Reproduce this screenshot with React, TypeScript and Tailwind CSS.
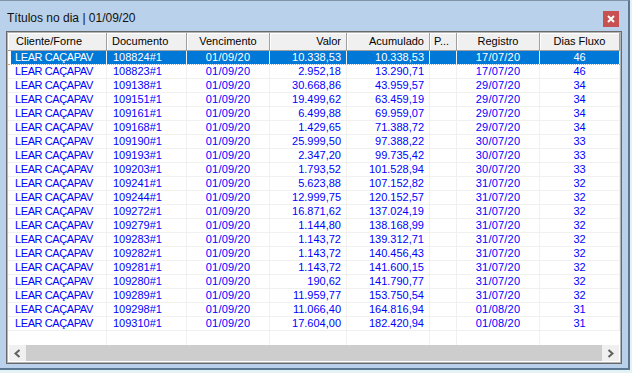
import React from "react";

type Row = {
  doc: string;
  valor: string;
  acum: string;
  reg: string;
  dias: string;
};

const rows: Row[] = [
  { doc: "108824#1", valor: "10.338,53", acum: "10.338,53", reg: "17/07/20", dias: "46" },
  { doc: "108823#1", valor: "2.952,18", acum: "13.290,71", reg: "17/07/20", dias: "46" },
  { doc: "109138#1", valor: "30.668,86", acum: "43.959,57", reg: "29/07/20", dias: "34" },
  { doc: "109151#1", valor: "19.499,62", acum: "63.459,19", reg: "29/07/20", dias: "34" },
  { doc: "109161#1", valor: "6.499,88", acum: "69.959,07", reg: "29/07/20", dias: "34" },
  { doc: "109168#1", valor: "1.429,65", acum: "71.388,72", reg: "29/07/20", dias: "34" },
  { doc: "109190#1", valor: "25.999,50", acum: "97.388,22", reg: "30/07/20", dias: "33" },
  { doc: "109193#1", valor: "2.347,20", acum: "99.735,42", reg: "30/07/20", dias: "33" },
  { doc: "109203#1", valor: "1.793,52", acum: "101.528,94", reg: "30/07/20", dias: "33" },
  { doc: "109241#1", valor: "5.623,88", acum: "107.152,82", reg: "31/07/20", dias: "32" },
  { doc: "109244#1", valor: "12.999,75", acum: "120.152,57", reg: "31/07/20", dias: "32" },
  { doc: "109272#1", valor: "16.871,62", acum: "137.024,19", reg: "31/07/20", dias: "32" },
  { doc: "109279#1", valor: "1.144,80", acum: "138.168,99", reg: "31/07/20", dias: "32" },
  { doc: "109283#1", valor: "1.143,72", acum: "139.312,71", reg: "31/07/20", dias: "32" },
  { doc: "109282#1", valor: "1.143,72", acum: "140.456,43", reg: "31/07/20", dias: "32" },
  { doc: "109281#1", valor: "1.143,72", acum: "141.600,15", reg: "31/07/20", dias: "32" },
  { doc: "109280#1", valor: "190,62", acum: "141.790,77", reg: "31/07/20", dias: "32" },
  { doc: "109289#1", valor: "11.959,77", acum: "153.750,54", reg: "31/07/20", dias: "32" },
  { doc: "109298#1", valor: "11.066,40", acum: "164.816,94", reg: "01/08/20", dias: "31" },
  { doc: "109310#1", valor: "17.604,00", acum: "182.420,94", reg: "01/08/20", dias: "31" },
];

const headCell =
  "h-full flex items-center shrink-0 bg-[#f0f0f0] border-r border-b border-[#a0a0a0] shadow-[inset_1px_1px_0_#ffffff] whitespace-nowrap overflow-hidden";

function Chevron({ dir }: { dir: "left" | "right" }) {
  return (
    <svg width="7" height="9" viewBox="0 0 7 9">
      <polyline
        points={dir === "left" ? "5.5,1 1.5,4.5 5.5,8" : "1.5,1 5.5,4.5 1.5,8"}
        fill="none"
        stroke="#606060"
        strokeWidth="2"
      />
    </svg>
  );
}

export default function App() {
  return (
    <div
      className="w-[632px] h-[373px] bg-[#e4f1f5] overflow-hidden flex"
      style={{ fontFamily: '"Liberation Sans", Arial, sans-serif' }}
    >
      <div className="w-[630px] h-[370px] shrink-0 bg-[#b9d1ea] border-t border-t-[#8193a6] border-r-2 border-b-2 border-[#5b7892] flex flex-col">
        {/* Title bar */}
        <div className="h-[30px] flex items-start justify-between pl-[7px] pr-[9px] shrink-0">
          <div className="mt-[11px] text-[12px] leading-none text-[#111]">
            Títulos no dia | 01/09/20
          </div>
          <div className="mt-[10px] w-[16px] h-[16px] bg-[#c75050] flex items-center justify-center">
            <svg width="8" height="8" viewBox="0 0 8 8">
              <path d="M1 1 L7 7 M7 1 L1 7" stroke="#ffffff" strokeWidth="2" />
            </svg>
          </div>
        </div>

        {/* List view */}
        <div className="ml-[6px] w-[616px] h-[333px] border border-[#696969] shrink-0">
          <div className="w-full h-full border border-[#b4b4b4] bg-white flex flex-col text-[11px] leading-none">
            {/* Header */}
            <div className="h-[18px] flex shrink-0 text-black">
              <div className={`${headCell} w-[99px] pl-[8px]`}>Cliente/Forne</div>
              <div className={`${headCell} w-[80px] pl-[5px]`}>Documento</div>
              <div className={`${headCell} w-[83px] justify-center`}>Vencimento</div>
              <div className={`${headCell} w-[77px] justify-end pr-[5px]`}>Valor</div>
              <div className={`${headCell} w-[83px] justify-end pr-[5px]`}>Acumulado</div>
              <div className={`${headCell} w-[27px] pl-[4px]`}>P...</div>
              <div className={`${headCell} w-[83px] justify-center`}>Registro</div>
              <div className={`${headCell} w-[80px] justify-center`}>Dias Fluxo</div>
            </div>

            {/* Rows */}
            {rows.map((r, i) => {
              const sel = i === 0;
              const cell = `h-full flex items-center shrink-0 border-r border-[#f0f0f0] whitespace-nowrap ${
                sel ? "bg-[#0078d7]" : ""
              }`;
              return (
                <div
                  key={r.doc}
                  className={`h-[14px] flex shrink-0 border-b ${
                    sel ? "border-dotted border-[#e9a25a] text-white" : "border-[#f0f0f0] text-[#0000ff]"
                  }`}
                >
                  <div className="w-[3px] shrink-0" />
                  <div className={`${cell} w-[96px] pl-[4px] tracking-[-0.4px]`}>LEAR CAÇAPAV</div>
                  <div className={`${cell} w-[80px] pl-[6px]`}>{r.doc}</div>
                  <div className={`${cell} w-[83px] justify-center tracking-[0.2px]`}>01/09/20</div>
                  <div className={`${cell} w-[77px] justify-end pr-[5px]`}>{r.valor}</div>
                  <div className={`${cell} w-[83px] justify-end pr-[5px]`}>{r.acum}</div>
                  <div className={`${cell} w-[27px]`} />
                  <div className={`${cell} w-[83px] justify-center tracking-[0.2px]`}>{r.reg}</div>
                  <div className={`${cell} w-[80px] justify-center`}>{r.dias}</div>
                </div>
              );
            })}

            {/* Empty area with column lines */}
            <div className="flex-1 flex">
              <div className="w-[99px] shrink-0 border-r border-[#f0f0f0]" />
              <div className="w-[80px] shrink-0 border-r border-[#f0f0f0]" />
              <div className="w-[83px] shrink-0 border-r border-[#f0f0f0]" />
              <div className="w-[77px] shrink-0 border-r border-[#f0f0f0]" />
              <div className="w-[83px] shrink-0 border-r border-[#f0f0f0]" />
              <div className="w-[27px] shrink-0 border-r border-[#f0f0f0]" />
              <div className="w-[83px] shrink-0 border-r border-[#f0f0f0]" />
            </div>

            {/* Horizontal scrollbar */}
            <div className="h-[16px] mx-[1px] mb-[1px] shrink-0 flex bg-[#f0f0f0]">
              <div className="w-[17px] flex items-center justify-center">
                <Chevron dir="left" />
              </div>
              <div className="flex-1 bg-[#cdcdcd]" />
              <div className="w-[17px] flex items-center justify-center">
                <Chevron dir="right" />
              </div>
            </div>
          </div>
        </div>
      </div>
    </div>
  );
}
